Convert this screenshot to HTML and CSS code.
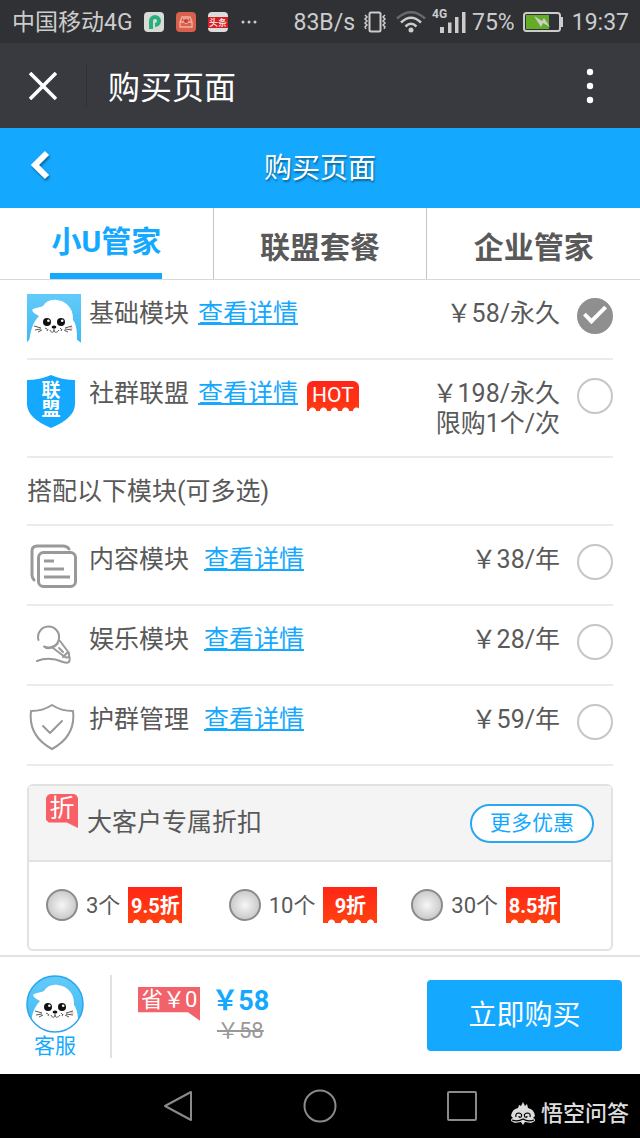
FILE: index.html
```html
<!DOCTYPE html>
<html lang="zh-CN">
<head>
<meta charset="utf-8">
<meta name="viewport" content="width=device-width, initial-scale=1">
<title>购买页面</title>
<link rel="stylesheet" href="styles.css">
</head>
<body class="page">
<svg class="defs" aria-hidden="true">
  <defs>
    <linearGradient id="sky" x1="0" y1="0" x2="0" y2="1"><stop offset="0" stop-color="#63cbf9"/><stop offset="1" stop-color="#3fb8f4"/></linearGradient>
    <clipPath id="round"><circle cx="29" cy="29" r="28"/></clipPath>
  </defs>
  <symbol id="seal" viewBox="0 0 54 50">
    <path fill="#fff" d="M2 50C3 37 6 28 12 22C9 20 6 19 5 16C8 13 13 14 16 12C19 7 24 5 30 6C39 7 46 14 46 24L46 26C50 31 50 39 50 46L54 49V50Z"/>
    <g fill="#111"><circle cx="20" cy="28" r="4"/><circle cx="34" cy="28" r="4"/><ellipse cx="27" cy="33" rx="2.4" ry="1.6"/></g>
    <g fill="#fff"><circle cx="21.4" cy="26.8" r="1.3"/><circle cx="35.2" cy="26.8" r="1.3"/></g>
    <path fill="none" stroke="#555" stroke-width="1" d="M27 34v2M23 36c1 3 4 3 4 0c0 3 3 3 5 0M7 32l7 2M8 36l6-1M11 38l4-2M45 32l-7 2M45 36l-7-1M41 38l-4-2M18 34l2 1M20 37l1-2M33 34l2 2M34 37l1-2"/>
    <ellipse cx="44" cy="34" rx="2" ry="1" fill="#f79a9a" opacity=".6"/>
  </symbol>
</svg>

<div class="status">
  <span class="carrier">中国移动4G</span>
  <svg class="app-icon" viewBox="0 0 20 20"><rect width="20" height="20" rx="4" fill="#d8dad8"/><path d="M7 17V9a4 4 0 1 1 4 4" fill="none" stroke="#25b07c" stroke-width="4"/><circle cx="11" cy="9" r="1.5" fill="#d8dad8"/></svg>
  <svg class="app-icon" viewBox="0 0 20 20"><rect width="20" height="20" rx="4" fill="#d9604c"/><path d="M4 10l2-5h8l2 5v5H4zM4 10h4q2 3 4 0h4M7 7h6" fill="none" stroke="#f0b49f" stroke-width="1.3"/><circle cx="10" cy="9" r="2" fill="#c33f48"/></svg>
  <svg class="app-icon" viewBox="0 0 20 20"><rect width="20" height="20" rx="4" fill="#dcdcdc"/><path fill="#d51c20" d="M0 5h20v11H0z"/><text x="10" y="14" text-anchor="middle" class="news-mark">头条</text></svg>
  <svg class="more-dots" viewBox="0 0 18 6"><g fill="#ccc"><circle cx="3" cy="3" r="1.5"/><circle cx="9" cy="3" r="1.5"/><circle cx="15" cy="3" r="1.5"/></g></svg>
  <span class="speed">83B/s</span>
  <svg class="vibrate" viewBox="0 0 26 22"><rect x="7.500" y="1.500" width="11" height="19" rx="1.500" fill="none" stroke="#ccc" stroke-width="2"/><path d="M3 4l2 2-2 2 2 2-2 2 2 2-2 2 1 2M23 4l-2 2 2 2-2 2 2 2-2 2 2 2-1 2" fill="none" stroke="#ccc" stroke-width="1.500"/></svg>
  <svg class="wifi" viewBox="0 0 30 22"><g fill="none" stroke-width="2.500"><path d="M1 7.500Q15-5 29 7.500" stroke="#68696b"/><path d="M5 11.500Q15 2 25 11.500M9.500 15.500Q15 10 20.500 15.500" stroke="#ccc"/></g><circle cx="15" cy="19" r="2.500" fill="#ccc"/></svg>
  <svg class="signal" viewBox="0 0 34 28"><text x="0" y="12" class="net-mark">4G</text><path fill="#ccc" d="M8 21h4v6H8zM16 16.500h3.500V27H16zM23 11h3.500v16H23zM30 6h3.500v21H30z"/></svg>
  <span>75%</span>
  <svg class="battery" viewBox="0 0 40 20"><rect x="1" y="1" width="36" height="18" rx="2.500" fill="none" stroke="#ccc" stroke-width="2"/><path fill="#ccc" d="M37 5h3v10h-3z"/><path fill="#62ad25" d="M3 3h23v14H3z"/><path fill="#ccc" d="M11 4l8 5 2-3 6 9-7-4-2 4z"/></svg>
  <span>19:37</span>
</div>

<header class="appbar">
  <button class="icon-button close" aria-label="关闭"><svg viewBox="0 0 28 28"><path d="M1 1l26 26M27 1L1 27" stroke="#fff" stroke-width="3.600"/></svg></button>
  <span class="appbar-title">购买页面</span>
  <button class="icon-button menu" aria-label="菜单"><svg viewBox="0 0 8 36"><g fill="#fff"><circle cx="4" cy="4" r="3.200"/><circle cx="4" cy="18" r="3.200"/><circle cx="4" cy="32" r="3.200"/></g></svg></button>
</header>

<div class="banner">
  <button class="icon-button back" aria-label="返回"><svg viewBox="0 0 22 32"><path d="M17 4L5 16l12 12" fill="none" stroke="#fff" stroke-width="6"/></svg></button>
  <h1 class="banner-title">购买页面</h1>
</div>

<nav class="tabs">
  <a class="tab active" href="#"><span class="tab-label">小U管家</span></a>
  <a class="tab" href="#">联盟套餐</a>
  <a class="tab" href="#">企业管家</a>
</nav>

<main class="content">
  <div class="row">
    <svg class="row-icon" viewBox="0 0 54 54"><path fill="url(#sky)" d="M0 0h54v49l-5-4H3l-3 3z"/><use href="#seal" width="54" height="50"/></svg>
    <div class="info"><label for="m1">基础模块</label><a class="link" href="#">查看详情</a></div>
    <div class="price">￥58/永久</div>
    <input class="pick" type="radio" name="base" id="m1" checked>
  </div>
  <div class="row tall">
    <svg class="row-icon" viewBox="0 0 54 54"><path fill="#14a9ff" d="M24 1Q35 6 48 6V30Q48 44 24 54Q0 44 0 30V6Q13 6 24 1Z"/><g class="shield-mark"><text x="24" y="23">联</text><text x="24" y="42">盟</text></g></svg>
    <div class="info"><label for="m2">社群联盟</label><a class="link" href="#">查看详情</a><span class="hot">HOT</span></div>
    <div class="price">￥198/永久<br>限购1个/次</div>
    <input class="pick" type="radio" name="base" id="m2">
  </div>
  <h2 class="subhead">搭配以下模块(可多选)</h2>
  <div class="row">
    <svg class="row-icon line" viewBox="0 0 54 54"><path d="M7 40Q5 38 5 35V11Q5 6 10 6H36Q40 6 42 9"/><rect x="11.500" y="12.500" width="37" height="34" rx="5"/><path class="butt" d="M17 21h10M17 29h20M17 37h26"/></svg>
    <div class="info wide"><label for="m3">内容模块</label><a class="link" href="#">查看详情</a></div>
    <div class="price">￥38/年</div>
    <input class="pick" type="checkbox" id="m3">
  </div>
  <div class="row">
    <svg class="row-icon thin" viewBox="0 0 54 54"><path d="M11.500 20A10.500 10.500 0 1 1 17 26.500M19 28q8 1 12-5M33 21L42 33Q43 39 38 37L26 28M32 28l4 4M36 37l5-5M42 35Q45 45 36 42Q22 36 10 41"/></svg>
    <div class="info wide"><label for="m4">娱乐模块</label><a class="link" href="#">查看详情</a></div>
    <div class="price">￥28/年</div>
    <input class="pick" type="checkbox" id="m4">
  </div>
  <div class="row">
    <svg class="row-icon line shield" viewBox="0 0 54 54"><path d="M25 5Q34 11 46 11Q49 36 25 49Q1 36 4 11Q16 11 25 5Z"/><path d="M16 26l7 7 12-12"/></svg>
    <div class="info wide"><label for="m5">护群管理</label><a class="link" href="#">查看详情</a></div>
    <div class="price">￥59/年</div>
    <input class="pick" type="checkbox" id="m5">
  </div>

  <section class="card">
    <div class="card-head">
      <span class="zhe">折</span>
      <h2 class="card-title">大客户专属折扣</h2>
      <button class="more">更多优惠</button>
    </div>
    <div class="deals">
      <label class="deal"><input class="knob" type="radio" name="deal"><span>3个</span><b class="ticket">9.5折</b></label>
      <label class="deal"><input class="knob" type="radio" name="deal"><span>10个</span><b class="ticket">9折</b></label>
      <label class="deal"><input class="knob" type="radio" name="deal"><span>30个</span><b class="ticket">8.5折</b></label>
    </div>
  </section>
</main>

<footer class="checkout">
  <a class="service" href="#">
    <svg class="avatar" viewBox="0 0 58 58"><circle cx="29" cy="29" r="28" fill="url(#sky)"/><g clip-path="url(#round)"><use href="#seal" x="2" y="4" width="54" height="50"/><path fill="#fff" d="M4 50h50v8H4z"/></g><circle cx="29" cy="29" r="28" fill="none" stroke="#2aa5ee" stroke-width="1.500"/></svg>
    <span>客服</span>
  </a>
  <span class="save">省￥0</span>
  <div class="total"><strong class="now">￥58</strong><s class="was">￥58</s></div>
  <button class="buy">立即购买</button>
</footer>

<div class="navbar">
  <button class="icon-button key" aria-label="后退"><svg viewBox="0 0 34 34"><path d="M30 3V31L4 17Z"/></svg></button>
  <button class="icon-button key" aria-label="主屏幕"><svg viewBox="0 0 34 34"><circle cx="17" cy="17" r="15.500"/></svg></button>
  <button class="icon-button key" aria-label="最近任务"><svg viewBox="0 0 34 34"><rect x="3" y="3" width="28" height="28" rx="1"/></svg></button>
  <div class="watermark">
    <svg viewBox="0 0 26 24"><path fill="#ddd" d="M1 14Q2 7 8 6L9 3 11 4 13 0 15 4 17 2 18 6Q24 7 25 14L23 16Q25 16 25 19L21 21 15 20 13 23 11 20 5 21 1 19Q1 16 3 16Z"/><path d="M6 15q-1-4 3-4q4 1 2 4q-2 1-2-1M20 15q1-4-3-4q-4 1-2 4q2 1 2-1M2 18q6 2 11-1q5 3 11 1" fill="none" stroke="#000" stroke-width="1.200"/></svg>
    <span>悟空问答</span>
  </div>
</div>
</body>
</html>
```

FILE: styles.css
```css
*, *::before { box-sizing: border-box; }

.page {
  margin: 0;
  min-height: 100vh;
  display: flex;
  flex-direction: column;
  background: #fff;
  color: #595959;
  font-family: Roboto, "Noto Sans CJK SC", sans-serif;
  font-size: 25px;
  line-height: 30px;
}

.defs { position: absolute; width: 0; height: 0; }
button, input { font: inherit; margin: 0; padding: 0; }
svg { display: block; flex: none; }
a { color: inherit; text-decoration: none; }

.icon-button { display: flex; border: 0; background: none; }

/* Status bar */
.status {
  display: flex;
  align-items: center;
  height: 43px;
  padding: 0 11px 0 12px;
  background: #303135;
  color: #ccc;
  font-size: 23px;
  line-height: 34px;
}
.status span { padding-top: 2px; }
.carrier { margin-right: 11px; }
.app-icon { width: 20px; height: 20px; margin-right: 12px; }
.news-mark { font-size: 9px; font-weight: 700; fill: #f3d6d6; }
.more-dots { width: 18px; }
.speed { margin-left: auto; }
.vibrate { width: 26px; margin-left: 7px; }
.wifi { width: 30px; margin: 0 6px 0 8px; }
.signal { width: 34px; margin: 0 6px 4px 0; }
.net-mark { font-size: 12px; font-weight: 700; fill: #ccc; }
.battery { width: 40px; margin: 0 9px 0 8px; }

/* Window title bar */
.appbar {
  display: flex;
  align-items: center;
  height: 85px;
  background: #393a3f;
  color: #fff;
  font-size: 32px;
}
.close { padding: 8px 29px; border-right: 1px solid #303135; }
.close svg { width: 28px; }
.appbar-title { margin-left: 21px; padding-top: 4px; line-height: 40px; }
.menu { margin-left: auto; padding: 0 46px; }
.menu svg { width: 8px; }

/* Page banner */
.banner {
  display: grid;
  grid-template-columns: 1fr auto 1fr;
  align-items: center;
  height: 80px;
  background: #14a9ff;
  color: #fff;
}
.back { justify-self: start; padding: 0 30px 6px; filter: drop-shadow(1px 2px 1px #0006); }
.back svg { width: 22px; }
.banner-title { margin: 0; padding-top: 2px; font-size: 28px; font-weight: 400; line-height: 40px; text-shadow: 1px 2px 2px #0006; }

/* Tabs */
.tabs { display: flex; height: 72px; border-bottom: 1px solid #d8d8d8; }
.tab {
  flex: 1;
  display: flex;
  justify-content: center;
  align-items: center;
  padding-top: 8px;
  color: #595959;
  font-size: 30px;
  font-weight: 700;
}
.tab + .tab { border-left: 1px solid #c4c4c4; }
.active { padding: 0; color: #14a9ff; }
.tab-label { align-self: stretch; padding: 19px 1px 0; border-bottom: 6px solid #14a9ff; }

/* Module list */
.content { flex: 1; padding: 0 27px 3px; }
.row {
  display: flex;
  align-items: flex-start;
  height: 80px;
  padding-top: 14px;
  border-bottom: 2px solid #ebebeb;
}
.tall { height: 98px; }
.row-icon { width: 54px; height: 54px; margin-right: 8px; }
.line, .thin { fill: none; stroke: #999; stroke-width: 3; stroke-linecap: round; stroke-linejoin: round; }
.thin, .shield { stroke-width: 2; }
.butt { stroke-linecap: butt; }
.shield-mark { fill: #fff; font-size: 19px; font-weight: 700; text-anchor: middle; }
.info { display: flex; gap: 9px; padding-top: 5px; }
.wide { gap: 15px; }
.link { color: #14a9ff; text-decoration: underline; text-decoration-thickness: 2px; text-underline-offset: 1px; }
.hot {
  height: 30px;
  padding: 0 5px;
  border-radius: 6px 6px 0 0;
  background:
    radial-gradient(circle at 50% 100%, #fff 3px, #0000 4px) 0 100% / 11px 5px repeat-x,
    linear-gradient(#ff2518, #ff3a12);
  color: #fff;
  font-size: 21px;
  line-height: 28px;
  margin-top: 2px;
}
.price { margin-left: auto; padding-top: 5px; text-align: right; }
.pick {
  appearance: none;
  flex: none;
  width: 36px;
  height: 36px;
  margin: 4px 0 0 17px;
  border: 2px solid #c6c6c6;
  border-radius: 50%;
  background: #fff;
}
.pick:checked { border-color: #8f8f8f; background: #8f8f8f; }
.pick:checked::before {
  content: "";
  display: block;
  width: 22px;
  height: 12px;
  margin: 6px 0 0 5px;
  border: solid #fff;
  border-width: 0 0 4px 4px;
  transform: rotate(-45deg);
}
.subhead {
  height: 68px;
  margin: 0;
  padding-top: 19px;
  border-bottom: 2px solid #ebebeb;
  font-size: 25px;
  font-weight: 400;
}

/* Discount card */
.card { margin-top: 18px; border: 2px solid #e2e2e2; border-radius: 6px; }
.card-head {
  display: flex;
  align-items: center;
  height: 76px;
  padding: 0 17px;
  border-bottom: 2px solid #e2e2e2;
  background: #f4f4f4;
}
.zhe {
  align-self: flex-start;
  width: 32px;
  height: 34px;
  margin: 8px 9px 0 0;
  border-radius: 5px 5px 0 0;
  background: #f95f66;
  clip-path: polygon(0 0, 100% 0, 100% 100%, 65% 84%, 8% 84%, 0 76%);
  color: #fff;
  font-size: 25px;
  line-height: 29px;
  text-align: center;
}
.card-title { margin: 0; font-size: 25px; font-weight: 400; }
.more {
  margin-left: auto;
  height: 39px;
  padding: 0 18px;
  border: 2px solid #2ba6f0;
  border-radius: 20px;
  background: #fff;
  color: #14a9ff;
  font-size: 21px;
}
.deals {
  display: grid;
  grid-template-columns: repeat(3, 1fr);
  padding: 25px 17px 26px;
}
.deal { display: flex; align-items: center; gap: 8px; font-size: 22px; }
.deal span { padding-top: 2px; }
.knob {
  appearance: none;
  width: 32px;
  height: 32px;
  border: 2px solid #8b8b8b;
  border-radius: 50%;
  background: radial-gradient(circle, #f6f6f6, #c9c9c9 75%);
}
.ticket {
  width: 54px;
  height: 36px;
  background:
    radial-gradient(circle at 50% 100%, #fff 3px, #0000 4px) 2px 100% / 13px 5px repeat-x,
    linear-gradient(#ff2616, #ff4210);
  color: #fff;
  font-size: 20px;
  line-height: 38px;
  text-align: center;
}

/* Checkout bar */
.checkout {
  display: flex;
  align-items: flex-start;
  height: 119px;
  padding: 18px 18px 0 26px;
  border-top: 2px solid #e2e2e2;
  background: #fff;
}
.service {
  display: flex;
  flex-direction: column;
  align-items: flex-start;
  width: 86px;
  height: 83px;
  border-right: 2px solid #e2e2e2;
  color: #14a9ff;
  font-size: 21px;
  line-height: 26px;
}
.avatar { width: 58px; height: 58px; }
.service span { width: 58px; text-align: center; }
.save {
  height: 34px;
  margin: 12px 11px 0 26px;
  padding: 0 3px;
  background: #f2626a;
  clip-path: polygon(0 0, 100% 0, 100% 100%, 80% 74%, 0 74%);
  color: #fff;
  font-size: 22px;
  line-height: 26px;
}
.total { display: flex; flex-direction: column; align-items: center; padding-top: 10px; }
.now { color: #14a9ff; font-size: 27px; line-height: 32px; }
.was { color: #999; font-size: 22px; line-height: 28px; }
.buy {
  width: 195px;
  height: 71px;
  margin: 5px 0 0 auto;
  border: 0;
  border-radius: 4px;
  background: #14a9ff;
  color: #fff;
  font-size: 28px;
}

/* System navigation */
.navbar {
  position: relative;
  display: flex;
  justify-content: center;
  gap: 108px;
  padding: 15px 0;
  background: #000;
}
.key svg { width: 34px; fill: none; stroke: #8a8a8a; stroke-width: 2; stroke-linejoin: round; }
.watermark {
  position: absolute;
  right: 11px;
  bottom: 9px;
  display: flex;
  align-items: center;
  gap: 5px;
  color: #ddd;
  font-size: 22px;
  font-weight: 500;
}
.watermark svg { width: 26px; }
```
